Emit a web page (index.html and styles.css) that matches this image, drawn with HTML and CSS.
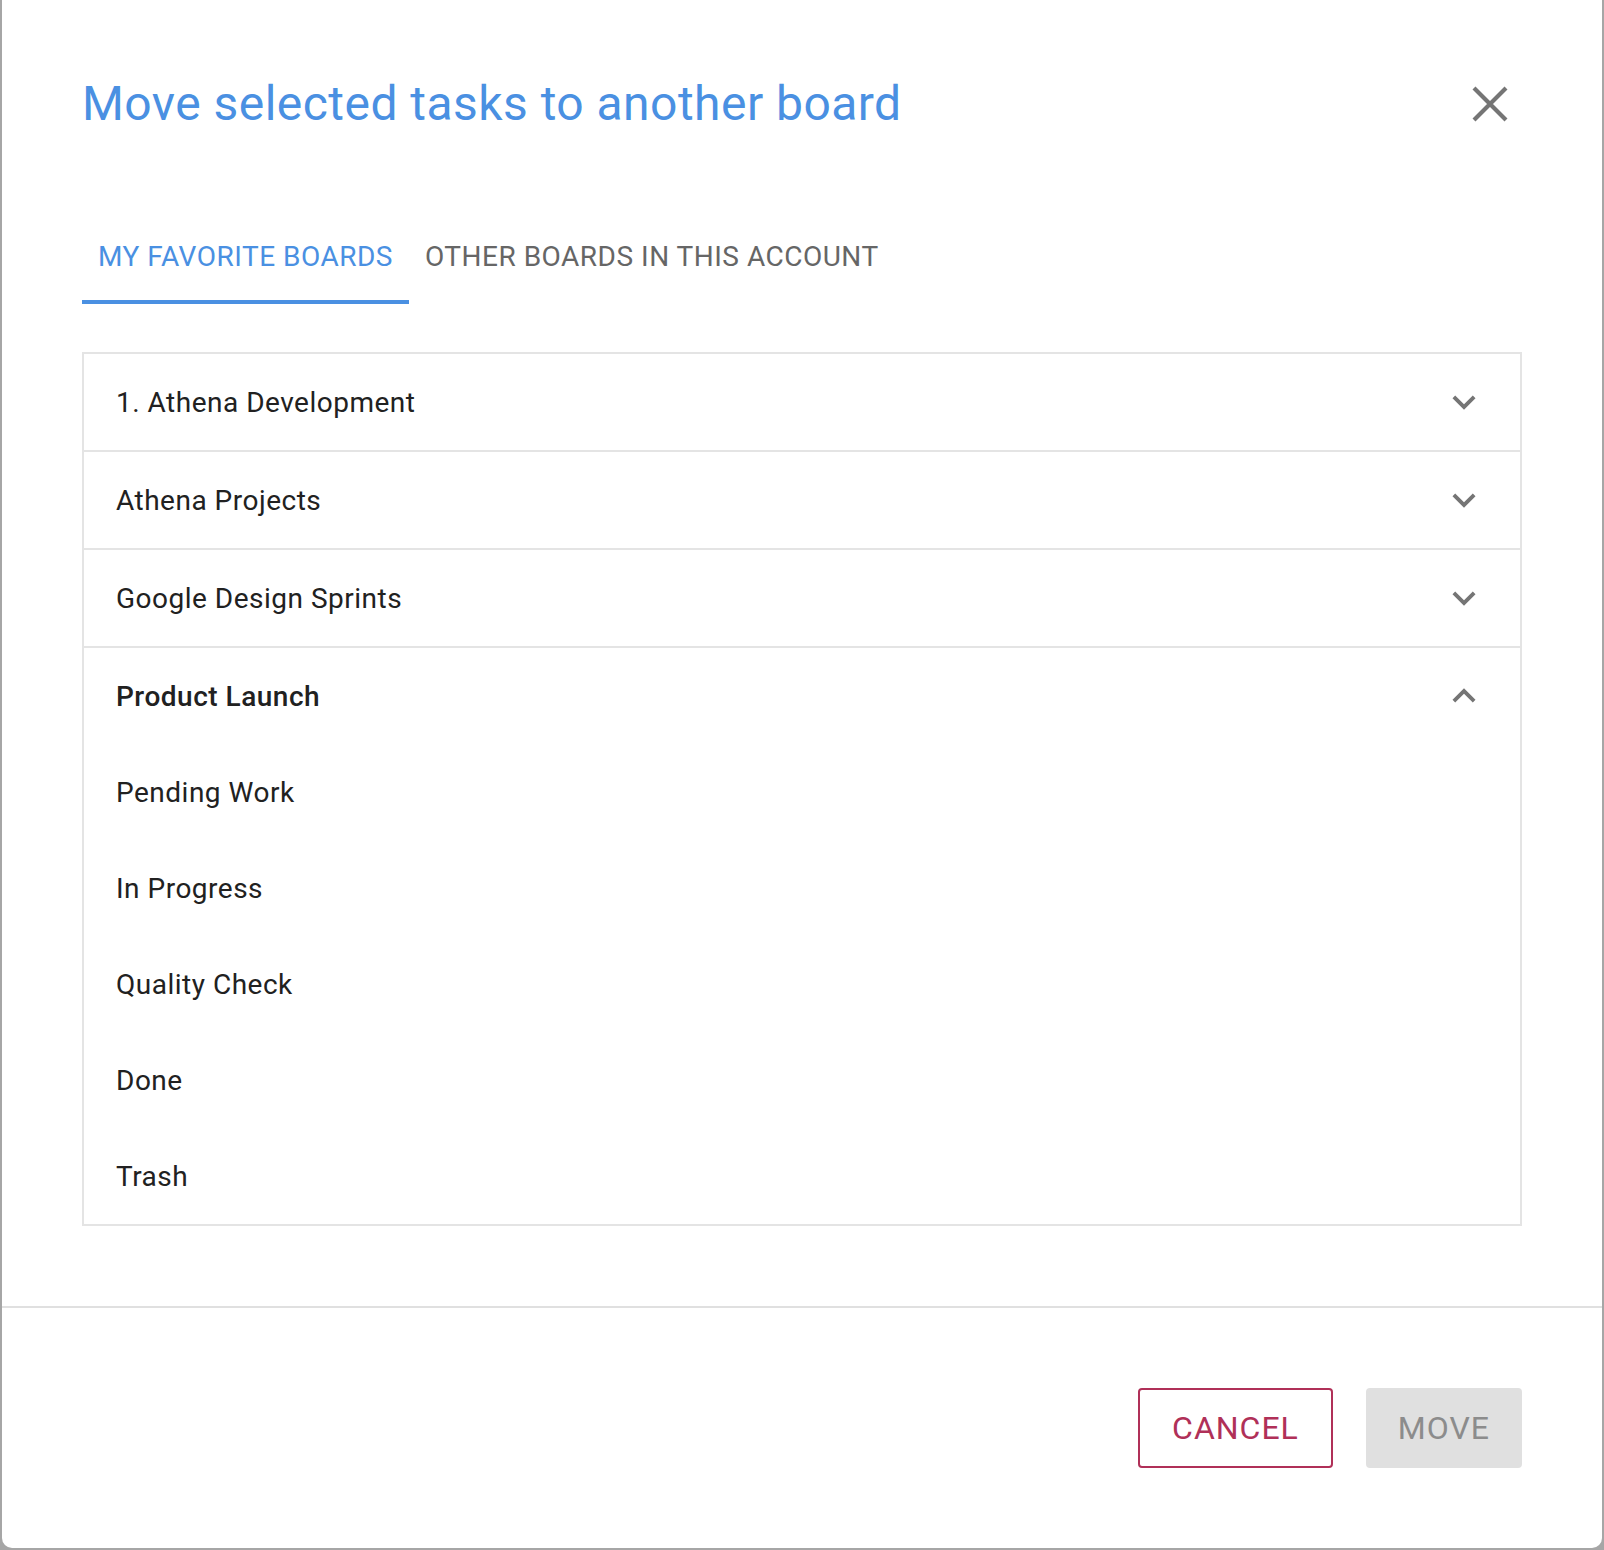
FILE: index.html
```html
<!DOCTYPE html>
<html lang="en">
<head>
    <meta charset="UTF-8">
    <meta name="viewport" content="width=device-width, initial-scale=1.0">
    <title>Move selected tasks</title>
    <link rel="stylesheet" href="styles.css">
</head>
<body>
    <div class="dialog">
        <div class="dialog-body">
            <div class="dialog-header">
                <h1 class="dialog-title">Move selected tasks to another board</h1>
                <button type="button" class="close-btn" aria-label="Close">
                    <svg width="36" height="36" viewBox="0 0 36 36">
                        <path d="M2 2L34 34M34 2L2 34" stroke="#757575" stroke-width="4.2" fill="none"/>
                    </svg>
                </button>
            </div>

            <!-- Abas -->
            <div class="tabs">
                <div class="tab active">My favorite boards</div>
                <div class="tab">Other boards in this account</div>
            </div>

            <!-- Lista de quadros -->
            <div class="board-list">
                <div class="board-row">
                    <span>1. Athena Development</span>
                    <svg class="chevron" viewBox="0 0 24 24"><path d="M16.59 8.59L12 13.17 7.41 8.59 6 10l6 6 6-6z"/></svg>
                </div>
                <div class="board-row">
                    <span>Athena Projects</span>
                    <svg class="chevron" viewBox="0 0 24 24"><path d="M16.59 8.59L12 13.17 7.41 8.59 6 10l6 6 6-6z"/></svg>
                </div>
                <div class="board-row">
                    <span>Google Design Sprints</span>
                    <svg class="chevron" viewBox="0 0 24 24"><path d="M16.59 8.59L12 13.17 7.41 8.59 6 10l6 6 6-6z"/></svg>
                </div>
                <div class="board-group">
                    <div class="board-row open">
                        <span>Product Launch</span>
                        <svg class="chevron" viewBox="0 0 24 24"><path d="M12 8l-6 6 1.41 1.41L12 10.83l4.59 4.58L18 14z"/></svg>
                    </div>
                    <div class="column-row">Pending Work</div>
                    <div class="column-row">In Progress</div>
                    <div class="column-row">Quality Check</div>
                    <div class="column-row">Done</div>
                    <div class="column-row">Trash</div>
                </div>
            </div>
        </div>

        <div class="dialog-footer">
            <button type="button" class="btn btn-cancel">Cancel</button>
            <button type="button" class="btn btn-move" disabled>Move</button>
        </div>
    </div>
</body>
</html>
```

FILE: styles.css
```css
/* Estilos básicos */
* {
    margin: 0;
    padding: 0;
    box-sizing: border-box;
    font-family: Roboto, "Liberation Sans", sans-serif;
}

body {
    background-color: #a6a6a6;
    width: 1604px;
    height: 1550px;
    overflow: hidden;
}

.dialog {
    width: 1600px;
    height: 1548px;
    margin-left: 2px;
    background-color: #fff;
    border-radius: 0 0 10px 10px;
    display: flex;
    flex-direction: column;
}

.dialog-body {
    flex: 1;
    padding: 0 80px;
}

.dialog-header {
    display: flex;
    align-items: center;
    justify-content: space-between;
    padding-top: 76px;
    height: 131px;
}

.dialog-title {
    font-size: 48px;
    font-weight: 400;
    line-height: 56px;
    letter-spacing: 0.46px;
    color: #4a90e2;
}

.close-btn {
    width: 36px;
    height: 36px;
    margin-right: 14px;
    border: none;
    background: none;
    cursor: pointer;
}

.close-btn svg {
    display: block;
}

.tabs {
    display: flex;
    margin-top: 77px;
}

.tab {
    padding: 33px 16px 27px;
    line-height: 32px;
    font-size: 28px;
    letter-spacing: 0.5px;
    text-transform: uppercase;
    color: #666;
    border-bottom: 4px solid transparent;
}

.tab.active {
    color: #4a90e2;
    border-bottom-color: #4a90e2;
}

.board-list {
    margin-top: 48px;
    border: 2px solid #e4e4e4;
}

.board-row {
    display: flex;
    align-items: center;
    justify-content: space-between;
    height: 98px;
    padding: 0 33px 0 32px;
    border-bottom: 2px solid #e4e4e4;
    font-size: 28px;
    letter-spacing: 0.5px;
    color: #212121;
}

.board-row.open {
    height: 96px;
    border-bottom: none;
    font-weight: 500;
}

.chevron {
    width: 46px;
    height: 46px;
    fill: #757575;
}

.column-row {
    display: flex;
    align-items: center;
    height: 96px;
    padding: 0 32px;
    font-size: 28px;
    letter-spacing: 0.5px;
    color: #212121;
}

.dialog-footer {
    display: flex;
    justify-content: flex-end;
    gap: 33px;
    padding: 80px 80px;
    border-top: 2px solid #e0e0e0;
}

.btn {
    height: 80px;
    padding: 0 32px;
    font-size: 32px;
    letter-spacing: 1px;
    text-transform: uppercase;
    border-radius: 4px;
    cursor: pointer;
}

.btn-cancel {
    background-color: #fff;
    color: #b03058;
    border: 2px solid #b03058;
}

.btn-move {
    padding: 0 30px;
    background-color: #e0e0e0;
    color: #8c8c8c;
    border: 2px solid #e0e0e0;
    cursor: default;
}
```
